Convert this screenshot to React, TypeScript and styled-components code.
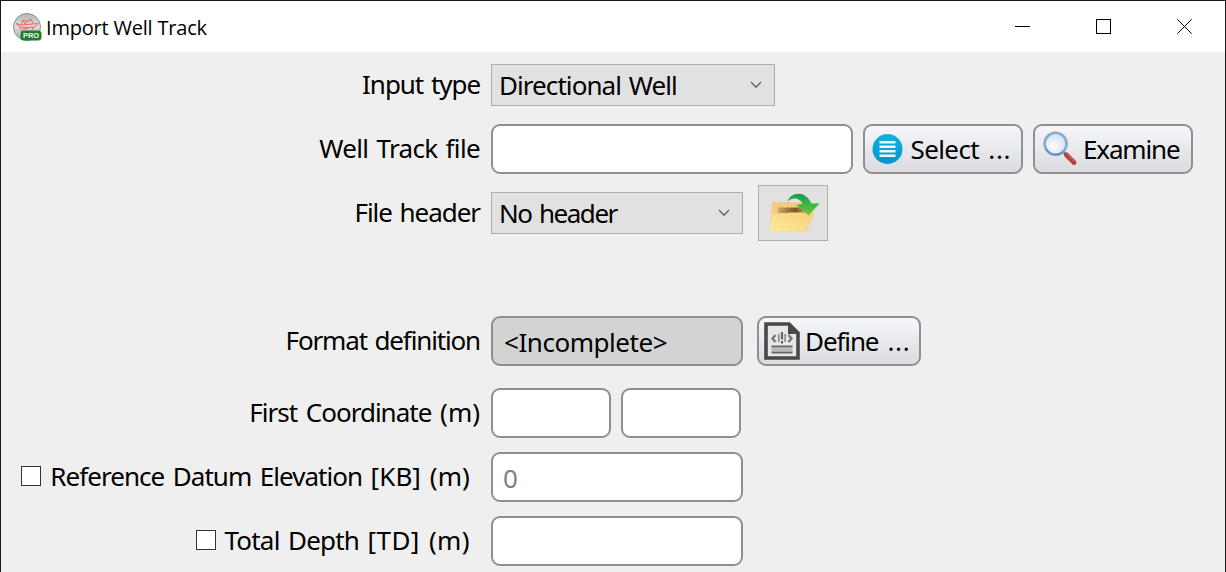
import React from "react";
import styled, { createGlobalStyle } from "styled-components";

const GlobalStyle = createGlobalStyle`
  * { box-sizing: border-box; }
  body { margin: 0; background: #efefef; overflow: hidden; }
`;

const Window = styled.div`
  width: 1226px;
  height: 572px;
  overflow: hidden;
  border: 1px solid #18181b;
  border-bottom: 0;
  background: #efefef;
  color: #000;
  font-family: "Noto Sans", "DejaVu Sans", sans-serif;
  font-size: 26px;
`;

const TitleBar = styled.header`
  display: flex;
  align-items: center;
  height: 51px;
  padding-left: 11px;
  background: #fff;
`;

const Title = styled.h1`
  flex: 1;
  margin: 0 0 0 4px;
  font: 400 20px/28px "Open Sans", sans-serif;
  letter-spacing: -0.2px;
  padding-top: 3px;
`;

const WindowButton = styled.button`
  display: flex;
  align-items: center;
  justify-content: center;
  width: 81px;
  height: 51px;
  padding: 0;
  border: 0;
  background: transparent;
`;

const Form = styled.main`
  display: flex;
  flex-direction: column;
  padding-top: 12px;
`;

const Row = styled.div<{ $height?: number; $gap?: number }>`
  display: flex;
  flex: none;
  align-items: center;
  height: ${(p) => p.$height ?? 50}px;
  margin-top: ${(p) => p.$gap ?? 0}px;
`;

const Text = styled.span<{ $spacing?: number; $word?: number }>`
  white-space: pre;
  line-height: 36px;
  letter-spacing: ${(p) => p.$spacing ?? 0}px;
  word-spacing: ${(p) => p.$word ?? 2}px;
`;

const LabelCell = styled.label<{ $inset?: number }>`
  display: flex;
  flex: none;
  align-items: center;
  justify-content: flex-end;
  width: 480px;
  margin-right: 10px;
  padding: 0 ${(p) => (p.$inset ?? 0) + 1}px 2px 0;
`;

const CheckBox = styled.span`
  width: 20px;
  height: 20px;
  margin-right: 9px;
  border: 1px solid #333;
  background: #fff;
`;

const Dropdown = styled.div<{ $width: number }>`
  display: flex;
  align-items: center;
  justify-content: space-between;
  width: ${(p) => p.$width}px;
  height: 42px;
  padding: 0 12px 0 7px;
  border: 1px solid #adadad;
  background: #e1e1e1;
`;

const Field = styled.div<{ $width: number; $tone?: "readonly" | "hint" }>`
  display: flex;
  align-items: center;
  width: ${(p) => p.$width}px;
  height: 50px;
  padding: 2px 10px 0 ${(p) => (p.$tone === "hint" ? 10 : 11)}px;
  border: 2px solid #8f8f8f;
  border-radius: 9px;
  background: ${(p) => (p.$tone === "readonly" ? "#d3d3d3" : "#fff")};
  color: ${(p) => (p.$tone === "hint" ? "#7f7f7f" : "#000")};

  & + & { margin-left: 10px; }
`;

const Button = styled.button<{ $width: number; $gap?: number; $pad?: number }>`
  display: flex;
  align-items: center;
  width: ${(p) => p.$width}px;
  height: 50px;
  margin: 0 0 0 ${(p) => p.$gap ?? 10}px;
  padding: 0 0 0 ${(p) => p.$pad ?? 7}px;
  border: 2px solid #8f8f91;
  border-radius: 9px;
  background: linear-gradient(#f6f7fa, #dadbde);
  color: #000;
  font: inherit;
  svg { flex: none; }
`;

const ButtonLabel = styled(Text)<{ $left: number }>`
  margin-left: ${(p) => p.$left}px;
`;

const IconButton = styled.button`
  display: flex;
  align-items: center;
  justify-content: center;
  width: 70px;
  height: 56px;
  margin: 0 0 0 15px;
  padding: 0 0 0 3px;
  border: 1px solid #adadad;
  background: #e1e1e1;
`;

const AppIcon = () => (
  <svg width="30" height="30" viewBox="0 0 30 30">
    <defs>
      <linearGradient id="ball" x1="0" y1="0" x2="0" y2="1">
        <stop offset="0" stopColor="#b4b4b4" />
        <stop offset=".45" stopColor="#dedede" />
        <stop offset="1" stopColor="#b0b0b0" />
      </linearGradient>
    </defs>
    <circle cx="15" cy="15" r="13.5" fill="url(#ball)" stroke="#8d8d8d" />
    <path
      d="M4 11.5L9 13L11 8L15 9.2L19 7L21 12L26 11.5L23 15L15 15.5L8 15L4 11.5M9 13L21 12M8 15L10 20L15 22M21 15L20 18M11 17L16 16.5M11 8L13 12L19 7"
      fill="none" stroke="#ee6464" strokeWidth="1"
    />
    <rect x="8.5" y="18.5" width="21" height="10" rx="3.5" fill="#1d7d2f" />
    <text x="19" y="26.4" textAnchor="middle" textLength="16" lengthAdjust="spacingAndGlyphs"
      fill="#f3fff3" fontFamily="Liberation Sans, sans-serif" fontSize="8" fontWeight="700">PRO</text>
  </svg>
);

const Chevron = () => (
  <svg width="12" height="8" viewBox="0 0 12 8">
    <path d="M1 1.2L6 6.2L11 1.2" fill="none" stroke="#4a4a4a" strokeWidth="1.2" />
  </svg>
);

const ListIcon = () => (
  <svg width="32" height="32" viewBox="0 0 32 32">
    <defs>
      <linearGradient id="disc" x1="0" y1="0" x2="0" y2="1">
        <stop offset="0" stopColor="#14b1e0" />
        <stop offset="1" stopColor="#0793d4" />
      </linearGradient>
    </defs>
    <circle cx="15.5" cy="16" r="15" fill="url(#disc)" />
    <path d="M7.5 9.3H23.5M7.5 13.7H23.5M7.5 18.2H23.5M7.5 22.8H23.5" stroke="#e9f8fd" strokeWidth="2.6" />
  </svg>
);

const MagnifierIcon = () => (
  <svg width="36" height="36" viewBox="0 0 36 36">
    <defs>
      <radialGradient id="lens" cx=".4" cy=".6" r=".6">
        <stop offset="0" stopColor="#fbfcff" />
        <stop offset="1" stopColor="#d5dff2" />
      </radialGradient>
    </defs>
    <path d="M21.5 21L25.5 25" stroke="#9a6a68" strokeWidth="3" />
    <path d="M24.5 24L32 31.5" stroke="#bd3c3c" strokeWidth="4.8" strokeLinecap="round" />
    <path d="M25.5 23.5L32.5 30.5" stroke="#d27070" strokeWidth="1" />
    <circle cx="13.6" cy="12.8" r="11" fill="url(#lens)" stroke="#85add0" strokeWidth="2.6" />
    <path d="M4.3 18A10.7 10.7 0 0 0 21.2 20.4" fill="none" stroke="#618fbc" strokeWidth="1.5" />
  </svg>
);

const FolderIcon = () => (
  <svg width="52" height="40" viewBox="0 0 52 40">
    <defs>
      <linearGradient id="folderFront" x1="0" y1="1" x2="1" y2="0">
        <stop offset="0" stopColor="#fdeb95" />
        <stop offset="1" stopColor="#f7cf7c" />
      </linearGradient>
      <linearGradient id="folderInside" x1="0" y1="0" x2="1" y2="0">
        <stop offset="0" stopColor="#cfaa62" />
        <stop offset=".65" stopColor="#75572a" />
        <stop offset="1" stopColor="#c79f5a" />
      </linearGradient>
      <linearGradient id="arrow" x1="0" y1="0" x2="0" y2="1">
        <stop offset="0" stopColor="#129c50" />
        <stop offset="1" stopColor="#72ca3d" />
      </linearGradient>
    </defs>
    <path d="M3 9H20L22 9.5H42V20H45L37.5 38.5H1L3 9Z" fill="#f3cb82" />
    <path d="M9 14.5H36V20H9Z" fill="url(#folderInside)" />
    <path d="M3 20.5H18L20 19.5H45L37 38.5H1Z" fill="url(#folderFront)" />
    <path d="M18.5 8.5C22-2 37-2.5 42.5 10.5H50.5L39.5 22.5L27.5 12L33.5 10.8C31 5 24 3.5 18.5 8.5Z" fill="url(#arrow)" />
  </svg>
);

const DocumentIcon = () => (
  <svg width="36" height="38" viewBox="0 0 36 38">
    <path d="M2 2H25L34 11V36H2Z" fill="#e7e7e9" stroke="#484848" strokeWidth="3.6" />
    <path d="M24 2L34 12H24Z" fill="#484848" />
    <path d="M11.5 13L8.5 16.5L11.5 20M24.5 13L27.5 16.5L24.5 20" fill="none" stroke="#777" strokeWidth="2.4" />
    <path d="M18 10V17.5M18 19V21.5" fill="none" stroke="#666" strokeWidth="2.2" />
    <path d="M14.8 12V20M21.2 12V20" fill="none" stroke="#8a8a8a" strokeWidth="1.6" />
    <path d="M7.5 24.5H28.5M7.5 30.5H28.5" stroke="#666" strokeWidth="2" />
    <path d="M7.5 27.5H28.5" stroke="#b0b0b0" strokeWidth="2.4" />
  </svg>
);

export default function App() {
  return (
    <>
      <GlobalStyle />
      <Window>
        <TitleBar>
          <AppIcon />
          <Title>Import Well Track</Title>
          <WindowButton aria-label="Minimize">
            <svg width="15" height="15"><path d="M0 7.5H15" stroke="#000" /></svg>
          </WindowButton>
          <WindowButton aria-label="Maximize">
            <svg width="15" height="15"><rect x=".5" y=".5" width="14" height="14" fill="none" stroke="#000" /></svg>
          </WindowButton>
          <WindowButton aria-label="Close">
            <svg width="15" height="15"><path d="M.3 .3L14.7 14.7M14.7 .3L.3 14.7" stroke="#000" /></svg>
          </WindowButton>
        </TitleBar>
        <Form>
          <Row $height={42}>
            <LabelCell><Text $spacing={-1.05}>Input type</Text></LabelCell>
            <Dropdown $width={284}><Text $spacing={-0.93}>Directional Well</Text><Chevron /></Dropdown>
          </Row>
          <Row $gap={18}>
            <LabelCell><Text $spacing={-0.65}>Well Track file</Text></LabelCell>
            <Field $width={362} />
            <Button $width={160}>
              <ListIcon />
              <ButtonLabel $left={6.5} $spacing={-0.6} $word={3}>Select </ButtonLabel>
              <ButtonLabel $left={0} $spacing={0.7}>...</ButtonLabel>
            </Button>
            <Button $width={160}>
              <MagnifierIcon />
              <ButtonLabel $left={5} $spacing={-1.15}>Examine</ButtonLabel>
            </Button>
          </Row>
          <Row $height={56} $gap={11}>
            <LabelCell><Text $spacing={-1.05}>File header</Text></LabelCell>
            <Dropdown $width={252}><Text $spacing={-1.45}>No header</Text><Chevron /></Dropdown>
            <IconButton aria-label="Open"><FolderIcon /></IconButton>
          </Row>
          <Row $gap={75}>
            <LabelCell><Text $spacing={-1.15}>Format definition</Text></LabelCell>
            <Field $width={252} $tone="readonly"><Text $spacing={-0.45}>{"<Incomplete>"}</Text></Field>
            <Button $width={164} $gap={14} $pad={5}>
              <DocumentIcon />
              <ButtonLabel $left={5} $spacing={-1.1} $word={3.3}>Define </ButtonLabel>
              <ButtonLabel $left={0} $spacing={0.7}>...</ButtonLabel>
            </Button>
          </Row>
          <Row $gap={22}>
            <LabelCell>
              <Text $spacing={-1} $word={3}>First Coordinate </Text><Text>(m)</Text>
            </LabelCell>
            <Field $width={120} />
            <Field $width={120} />
          </Row>
          <Row $gap={14}>
            <LabelCell $inset={10}>
              <CheckBox />
              <Text $spacing={-0.95} $word={2.6}>Reference Datum Elevation </Text><Text $spacing={0.08}>[KB] (m)</Text>
            </LabelCell>
            <Field $width={252} $tone="hint"><Text>0</Text></Field>
          </Row>
          <Row $gap={14}>
            <LabelCell $inset={10}>
              <CheckBox />
              <Text $spacing={-0.8} $word={2.5}>Total Depth </Text><Text $spacing={0.4}>[TD] (m)</Text>
            </LabelCell>
            <Field $width={252} />
          </Row>
        </Form>
      </Window>
    </>
  );
}
